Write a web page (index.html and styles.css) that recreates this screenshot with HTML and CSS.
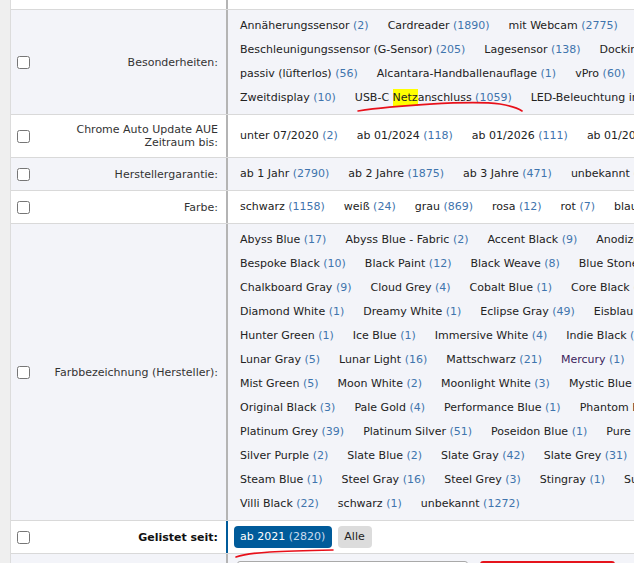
FILE: index.html
```html
<!DOCTYPE html>
<html lang="de">
<head>
    <meta charset="UTF-8">
    <title>Filter</title>
    <link rel="stylesheet" href="styles.css">
</head>
<body>
    <div class="filters">
        <div class="row row-top">
            <div class="label"></div>
            <div class="values"></div>
        </div>

        <div class="row alt">
            <div class="label"><input type="checkbox"><span>Besonderheiten:</span></div>
            <div class="values">
                <div class="line">
                    <a class="opt" href="#">Annäherungssensor <span class="cnt">(2)</span></a>
                    <a class="opt" href="#">Cardreader <span class="cnt">(1890)</span></a>
                    <a class="opt" href="#">mit Webcam <span class="cnt">(2775)</span></a>
                    <a class="opt" href="#">Fingerprint-Reader <span class="cnt">(1203)</span></a>
                </div>
                <div class="line">
                    <a class="opt" href="#">Beschleunigungssensor (G-Sensor) <span class="cnt">(205)</span></a>
                    <a class="opt" href="#">Lagesensor <span class="cnt">(138)</span></a>
                    <a class="opt" href="#">Dockingport <span class="cnt">(12)</span></a>
                </div>
                <div class="line">
                    <a class="opt" href="#">passiv (lüfterlos) <span class="cnt">(56)</span></a>
                    <a class="opt" href="#">Alcantara-Handballenauflage <span class="cnt">(1)</span></a>
                    <a class="opt" href="#">vPro <span class="cnt">(60)</span></a>
                    <a class="opt" href="#">Touchscreen <span class="cnt">(830)</span></a>
                </div>
                <div class="line">
                    <a class="opt" href="#">Zweitdisplay <span class="cnt">(10)</span></a>
                    <a class="opt" href="#">USB-C <mark>Netz</mark>anschluss <span class="cnt">(1059)</span></a>
                    <a class="opt" href="#">LED-Beleuchtung im Deckel <span class="cnt">(3)</span></a>
                </div>
            </div>
        </div>

        <div class="row">
            <div class="label"><input type="checkbox"><span>Chrome Auto Update AUE<br>Zeitraum bis:</span></div>
            <div class="values">
                <div class="line">
                    <a class="opt" href="#">unter 07/2020 <span class="cnt">(2)</span></a>
                    <a class="opt" href="#">ab 01/2024 <span class="cnt">(118)</span></a>
                    <a class="opt" href="#">ab 01/2026 <span class="cnt">(111)</span></a>
                    <a class="opt" href="#">ab 01/2028 <span class="cnt">(95)</span></a>
                </div>
            </div>
        </div>

        <div class="row alt">
            <div class="label"><input type="checkbox"><span>Herstellergarantie:</span></div>
            <div class="values">
                <div class="line">
                    <a class="opt" href="#">ab 1 Jahr <span class="cnt">(2790)</span></a>
                    <a class="opt" href="#">ab 2 Jahre <span class="cnt">(1875)</span></a>
                    <a class="opt" href="#">ab 3 Jahre <span class="cnt">(471)</span></a>
                    <a class="opt" href="#">unbekannt <span class="cnt">(12)</span></a>
                </div>
            </div>
        </div>

        <div class="row">
            <div class="label"><input type="checkbox"><span>Farbe:</span></div>
            <div class="values">
                <div class="line">
                    <a class="opt" href="#">schwarz <span class="cnt">(1158)</span></a>
                    <a class="opt" href="#">weiß <span class="cnt">(24)</span></a>
                    <a class="opt" href="#">grau <span class="cnt">(869)</span></a>
                    <a class="opt" href="#">rosa <span class="cnt">(12)</span></a>
                    <a class="opt" href="#">rot <span class="cnt">(7)</span></a>
                    <a class="opt" href="#">blau <span class="cnt">(93)</span></a>
                </div>
            </div>
        </div>

        <div class="row alt">
            <div class="label"><input type="checkbox"><span>Farbbezeichnung (Hersteller):</span></div>
            <div class="values">
                <div class="line">
                    <a class="opt" href="#">Abyss Blue <span class="cnt">(17)</span></a>
                    <a class="opt" href="#">Abyss Blue - Fabric <span class="cnt">(2)</span></a>
                    <a class="opt" href="#">Accent Black <span class="cnt">(9)</span></a>
                    <a class="opt" href="#">Anodized Silver <span class="cnt">(2)</span></a>
                </div>
                <div class="line">
                    <a class="opt" href="#">Bespoke Black <span class="cnt">(10)</span></a>
                    <a class="opt" href="#">Black Paint <span class="cnt">(12)</span></a>
                    <a class="opt" href="#">Black Weave <span class="cnt">(8)</span></a>
                    <a class="opt" href="#">Blue Stone <span class="cnt">(1)</span></a>
                </div>
                <div class="line">
                    <a class="opt" href="#">Chalkboard Gray <span class="cnt">(9)</span></a>
                    <a class="opt" href="#">Cloud Grey <span class="cnt">(4)</span></a>
                    <a class="opt" href="#">Cobalt Blue <span class="cnt">(1)</span></a>
                    <a class="opt" href="#">Core Black <span class="cnt">(3)</span></a>
                </div>
                <div class="line">
                    <a class="opt" href="#">Diamond White <span class="cnt">(1)</span></a>
                    <a class="opt" href="#">Dreamy White <span class="cnt">(1)</span></a>
                    <a class="opt" href="#">Eclipse Gray <span class="cnt">(49)</span></a>
                    <a class="opt" href="#">Eisblau <span class="cnt">(1)</span></a>
                </div>
                <div class="line">
                    <a class="opt" href="#">Hunter Green <span class="cnt">(1)</span></a>
                    <a class="opt" href="#">Ice Blue <span class="cnt">(1)</span></a>
                    <a class="opt" href="#">Immersive White <span class="cnt">(4)</span></a>
                    <a class="opt" href="#">Indie Black <span class="cnt">(1)</span></a>
                </div>
                <div class="line">
                    <a class="opt" href="#">Lunar Gray <span class="cnt">(5)</span></a>
                    <a class="opt" href="#">Lunar Light <span class="cnt">(16)</span></a>
                    <a class="opt" href="#">Mattschwarz <span class="cnt">(21)</span></a>
                    <a class="opt visited" href="#">Mercury <span class="cnt">(1)</span></a>
                    <a class="opt" href="#">Midnight Blue <span class="cnt">(2)</span></a>
                </div>
                <div class="line">
                    <a class="opt" href="#">Mist Green <span class="cnt">(5)</span></a>
                    <a class="opt" href="#">Moon White <span class="cnt">(2)</span></a>
                    <a class="opt" href="#">Moonlight White <span class="cnt">(3)</span></a>
                    <a class="opt" href="#">Mystic Blue <span class="cnt">(1)</span></a>
                </div>
                <div class="line">
                    <a class="opt" href="#">Original Black <span class="cnt">(3)</span></a>
                    <a class="opt" href="#">Pale Gold <span class="cnt">(4)</span></a>
                    <a class="opt" href="#">Performance Blue <span class="cnt">(1)</span></a>
                    <a class="opt" href="#">Phantom Black <span class="cnt">(2)</span></a>
                </div>
                <div class="line">
                    <a class="opt" href="#">Platinum Grey <span class="cnt">(39)</span></a>
                    <a class="opt" href="#">Platinum Silver <span class="cnt">(51)</span></a>
                    <a class="opt" href="#">Poseidon Blue <span class="cnt">(1)</span></a>
                    <a class="opt" href="#">Pure White <span class="cnt">(1)</span></a>
                </div>
                <div class="line">
                    <a class="opt" href="#">Silver Purple <span class="cnt">(2)</span></a>
                    <a class="opt" href="#">Slate Blue <span class="cnt">(2)</span></a>
                    <a class="opt" href="#">Slate Gray <span class="cnt">(42)</span></a>
                    <a class="opt" href="#">Slate Grey <span class="cnt">(31)</span></a>
                    <a class="opt" href="#">Sonic Blue <span class="cnt">(1)</span></a>
                </div>
                <div class="line">
                    <a class="opt" href="#">Steam Blue <span class="cnt">(1)</span></a>
                    <a class="opt" href="#">Steel Gray <span class="cnt">(16)</span></a>
                    <a class="opt" href="#">Steel Grey <span class="cnt">(3)</span></a>
                    <a class="opt" href="#">Stingray <span class="cnt">(1)</span></a>
                    <a class="opt" href="#">Sunset Gold <span class="cnt">(1)</span></a>
                </div>
                <div class="line">
                    <a class="opt" href="#">Villi Black <span class="cnt">(22)</span></a>
                    <a class="opt" href="#">schwarz <span class="cnt">(1)</span></a>
                    <a class="opt" href="#">unbekannt <span class="cnt">(1272)</span></a>
                </div>
            </div>
        </div>

        <div class="row row-active">
            <div class="label"><input type="checkbox"><span class="strong">Gelistet seit:</span></div>
            <div class="values">
                <div class="line buttons">
                    <a class="btn btn-on" href="#">ab 2021 <span class="cnt">(2820)</span></a>
                    <a class="btn" href="#">Alle</a>
                </div>
            </div>
        </div>

        <div class="row alt row-foot">
            <div class="label"></div>
            <div class="values">
                <div class="actions">
                    <span class="field"></span>
                    <span class="submit"></span>
                </div>
            </div>
        </div>
    </div>

    <!-- rote Markierungen -->
    <svg class="marks" width="634" height="563" viewBox="0 0 634 563">
        <path d="M358 111 C 390 106, 470 100, 500 104 C 512 106, 518 108, 522 111" fill="none" stroke="#e8101a" stroke-width="1.6" stroke-linecap="round"/>
        <path d="M236 557 C 250 552, 280 551, 333 550" fill="none" stroke="#e8101a" stroke-width="1.6" stroke-linecap="round"/>
    </svg>
</body>
</html>
```

FILE: styles.css
```css
html, body {
    margin: 0;
    height: 563px;
    overflow: hidden;
}
body {
    background-color: #efefef;
    padding-left: 10px;
    font-family: "DejaVu Sans", Verdana, sans-serif;
    font-size: 11px;
    color: #222;
    position: relative;
}
.filters {
    width: 1100px;
    background-color: #fff;
    border-left: 1px solid #dcdcdc;
}
.row {
    display: flex;
    border-bottom: 1px solid #d9d9d9;
    background-color: #fff;
}
.row.alt {
    background-color: #f3f4f9;
}
.row-top {
    height: 9px;
}
.label {
    width: 201px;
    flex: none;
    display: flex;
    align-items: center;
    padding: 8px 8px 8px 6px;
    border-right: 2px solid #b4b4b4;
    line-height: 13px;
    color: #333;
}
.row-top .label {
    padding: 0 8px 0 6px;
}
.label input {
    margin: 0;
    width: 13px;
    height: 13px;
    flex: none;
}
.label span {
    flex: 1;
    text-align: right;
}
.label .strong {
    font-weight: bold;
    color: #111;
}
.values {
    flex: 1;
    padding: 4px 6px;
    display: flex;
    flex-direction: column;
    justify-content: center;
}
.row-top .values {
    padding: 0;
}
.line {
    display: flex;
    gap: 7px;
    white-space: nowrap;
    line-height: 24px;
}
.opt {
    padding: 0 6px;
    color: #222;
    text-decoration: none;
}
.opt.visited {
    color: #3b1d5c;
}
.cnt {
    color: #3f74ad;
}
mark {
    background-color: #ffff00;
    color: inherit;
    padding: 2px 0;
}
.row-active .label {
    border-right-color: #005b9a;
}
.buttons {
    gap: 6px;
    align-items: center;
    height: 24px;
}
.btn {
    display: inline-block;
    height: 22px;
    line-height: 22px;
    padding: 0 7px 0 6px;
    border-radius: 4px;
    background-color: #dcdcdc;
    color: #222;
    text-decoration: none;
}
.btn-on {
    background-color: #005b9a;
    color: #fff;
}
.btn-on .cnt {
    color: #c9dcef;
}
.row-foot .values {
    padding: 7px 0 0 9px;
}
.actions {
    display: flex;
    gap: 12px;
}
.field {
    width: 229px;
    height: 24px;
    border: 1px solid #a9a9a9;
    border-radius: 3px;
    background-color: #fff;
}
.submit {
    width: 135px;
    height: 26px;
    border-radius: 3px;
    background-color: #e5141c;
}
.marks {
    position: absolute;
    left: 0;
    top: 0;
    pointer-events: none;
}
```
